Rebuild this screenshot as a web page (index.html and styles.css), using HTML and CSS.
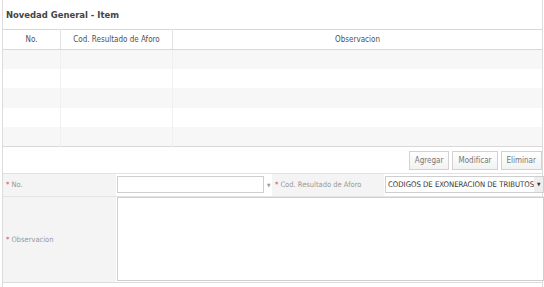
FILE: index.html
```html
<!DOCTYPE html>
<html lang="es">
<head>
    <meta charset="UTF-8">
    <title>Novedad General - Item</title>
    <link rel="stylesheet" href="styles.css">
</head>
<body>
    <div class="panel">
        <div class="panel-title">Novedad General - Item</div>

        <table class="grid">
            <thead>
                <tr>
                    <th class="col-no">No.</th>
                    <th class="col-cod">Cod. Resultado de Aforo</th>
                    <th>Observacion</th>
                </tr>
            </thead>
            <tbody>
                <tr class="odd"><td></td><td></td><td></td></tr>
                <tr><td></td><td></td><td></td></tr>
                <tr class="odd"><td></td><td></td><td></td></tr>
                <tr><td></td><td></td><td></td></tr>
                <tr class="odd"><td></td><td></td><td></td></tr>
            </tbody>
        </table>

        <div class="actions">
            <button class="btn">Agregar</button>
            <button class="btn">Modificar</button>
            <button class="btn">Eliminar</button>
        </div>

        <div class="form">
            <div class="label row-short"><span class="req">*</span> No.</div>
            <div class="field row-short">
                <span class="combo-box"></span>
                <span class="combo-arrow">&#9660;</span>
            </div>
            <div class="label row-short"><span class="req">*</span> Cod. Resultado de Aforo</div>
            <div class="field row-short">
                <div class="select">
                    <span class="select-text">CODIGOS DE EXONERACION DE TRIBUTOS</span>
                    <span class="select-arrow">&#9660;</span>
                </div>
            </div>
            <div class="label row-tall"><span class="req">*</span> Observacion</div>
            <div class="field field-obs row-tall">
                <div class="textarea"></div>
            </div>
        </div>
    </div>
</body>
</html>
```

FILE: styles.css
```css
body {
    margin: 0;
    background: #ffffff;
    font-family: "DejaVu Sans Condensed", "Liberation Sans", sans-serif;
    font-size: 8px;
    color: #555;
}
.panel {
    margin-left: 2px;
    width: 539px;
    height: 287px;
    border-left: 1px solid #dcdcdc;
    border-right: 1px solid #dcdcdc;
}
.panel-title {
    height: 29px;
    line-height: 29px;
    padding-left: 3px;
    font-size: 9.4px;
    font-weight: bold;
    color: #444;
}
.grid {
    width: 100%;
    border-collapse: collapse;
    border-top: 1px solid #d8d8d8;
    border-bottom: 1px solid #d8d8d8;
}
.grid th {
    height: 19px;
    font-weight: normal;
    color: #505050;
    border-right: 1px solid #e2e2e2;
    border-bottom: 1px solid #d8d8d8;
    padding: 0;
}
.grid th:last-child, .grid td:last-child {
    border-right: none;
}
.grid .col-no {
    width: 57px;
}
.grid .col-cod {
    width: 111px;
}
.grid td {
    height: 19.2px;
    padding: 0;
    border-right: 1px solid #f0f0f0;
}
.grid tr.odd td {
    background: #f7f7f7;
}
.actions {
    display: flex;
    justify-content: flex-end;
    gap: 3px;
    padding: 4px 0 3px 0;
}
.btn {
    height: 19px;
    padding: 0 5px;
    font-family: inherit;
    font-size: 8px;
    color: #777;
    background: linear-gradient(#ffffff, #f2f2f2);
    border: 1px solid #d2d2d2;
}
.form {
    display: grid;
    grid-template-columns: 113px 156px 112px 1fr;
    border-top: 1px solid #e2e2e2;
    border-bottom: 1px solid #dcdcdc;
    font-size: 7.5px;
}
.label {
    display: flex;
    align-items: center;
    gap: 2px;
    padding-left: 3px;
    background: #f4f4f4;
    color: #999;
}
.req {
    color: #d9534f;
}
.row-short {
    height: 22px;
    border-bottom: 1px solid #e4e4e4;
}
.row-tall {
    height: 85px;
}
.field {
    display: flex;
    align-items: center;
    padding: 0 1px;
}
.field-obs {
    grid-column: span 3;
}
.combo-box {
    display: block;
    width: 145px;
    height: 15px;
    border: 1px solid #cfcfcf;
    background: #fff;
}
.combo-arrow {
    font-size: 5px;
    color: #999;
    padding-left: 3px;
}
.select {
    flex: 1;
    display: flex;
    align-items: center;
    height: 15px;
    border: 1px solid #cfcfcf;
    background: #fff;
}
.select-text {
    flex: 1;
    padding-left: 2px;
    font-size: 7.7px;
    color: #333;
    white-space: nowrap;
    overflow: hidden;
}
.select-arrow {
    width: 9px;
    height: 15px;
    line-height: 15px;
    text-align: center;
    font-size: 5px;
    color: #333;
    background: #eeeeee;
}
.textarea {
    flex: 1;
    height: 82px;
    border: 1px solid #cfcfcf;
    background: #fff;
}
```
